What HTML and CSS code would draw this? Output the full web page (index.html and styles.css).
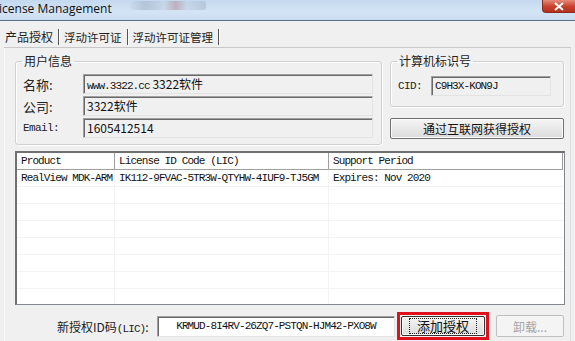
FILE: index.html
```html
<html>
<head>
<meta charset="utf-8">
<title>License Management</title>
<link rel="stylesheet" href="styles.css">
</head>
<body>

<div id="titlebar">
	<div class="title">icense Management</div>
	<div class="ghost"></div>
	<div class="close">
		<svg width="12" height="9" viewBox="0 0 12 9"><path d="M2 1 L10 8 M10 1 L2 8" stroke="#fff" stroke-width="2"/></svg>
	</div>
</div>

<div id="window">
	<div class="tabs">
		<span class="tab active">产品授权</span><span class="sep"></span>
		<span class="tab">浮动许可证</span><span class="sep"></span>
		<span class="tab">浮动许可证管理</span><span class="sep"></span>
	</div>

	<div class="panel">
		<div class="top">
			<fieldset class="group user">
				<legend>用户信息</legend>
				<div class="row">
					<span class="label">名称:</span>
					<span class="field"><span class="mono">www.3322.cc</span> 3322软件</span>
				</div>
				<div class="row">
					<span class="label">公司:</span>
					<span class="field">3322软件</span>
				</div>
				<div class="row">
					<span class="label mono">Email:</span>
					<span class="field">1605412514</span>
				</div>
			</fieldset>

			<div class="side">
				<fieldset class="group cid">
					<legend>计算机标识号</legend>
					<div class="row">
						<span class="label mono">CID:</span>
						<span class="field mono">C9H3X-KON9J</span>
					</div>
				</fieldset>
				<div class="button wide">通过互联网获得授权</div>
			</div>
		</div>

		<div class="list">
			<div class="lhead">
				<span class="c1">Product</span>
				<span class="c2">License ID Code (LIC)</span>
				<span class="c3">Support Period</span>
			</div>
			<div class="lrow">
				<span class="c1">RealView MDK-ARM</span>
				<span class="c2">IK112-9FVAC-5TR3W-QTYHW-4IUF9-TJ5GM</span>
				<span class="c3">Expires: Nov 2020</span>
			</div>
			<div class="lrow"><span class="c1"></span><span class="c2"></span><span class="c3"></span></div>
			<div class="lrow"><span class="c1"></span><span class="c2"></span><span class="c3"></span></div>
			<div class="lrow"><span class="c1"></span><span class="c2"></span><span class="c3"></span></div>
			<div class="lrow"><span class="c1"></span><span class="c2"></span><span class="c3"></span></div>
			<div class="lrow"><span class="c1"></span><span class="c2"></span><span class="c3"></span></div>
			<div class="lrow"><span class="c1"></span><span class="c2"></span><span class="c3"></span></div>
			<div class="lrow"><span class="c1"></span><span class="c2"></span><span class="c3"></span></div>
			<div class="lrow"><span class="c1"></span><span class="c2"></span><span class="c3"></span></div>
		</div>

		<div class="bottom">
			<span class="blabel">新授权ID码<span class="mono">(LIC)</span>:</span>
			<span class="field lic mono">KRMUD-8I4RV-26ZQ7-PSTQN-HJM42-PXO8W</span>
			<span class="mark"><span class="button add"><span class="focus">添加授权</span></span></span>
			<span class="button off">卸载...</span>
		</div>
	</div>
</div>

</body>
</html>
```

FILE: styles.css
```css
body {
	margin: 0;
	width: 575px;
	height: 341px;
	overflow: hidden;
	background: #f0f0f0;
	font-family: "Noto Sans CJK SC", "DejaVu Sans", sans-serif;
	font-size: 12px;
	color: #111;
}

.mono {
	font-family: "Liberation Mono", "Noto Sans CJK SC", monospace;
	font-size: 11px;
	letter-spacing: -0.9px;
}

#titlebar {
	height: 20px;
	display: flex;
	align-items: flex-start;
	background: linear-gradient(#c4d9ef, #d3e4f5 60%, #c9dcf0);
	border-bottom: 1px solid #5d6f86;
}

#titlebar .title {
	font-family: "Open Sans", "DejaVu Sans", sans-serif;
	font-size: 12px;
	line-height: 17px;
	color: #111;
	margin-left: -1px;
	width: 131px;
}

#titlebar .ghost {
	width: 76px;
	height: 9px;
	margin-top: 1px;
	background: linear-gradient(90deg, #c8d8ea, #a2b0c4 20%, #c2d1e3 45%, #b08c98 60%, #c2d1e3 75%, #a9b6c9);
	opacity: 0.55;
	border-radius: 3px;
	flex: none;
	margin-right: auto;
}

#titlebar .close {
	width: 32px;
	height: 12px;
	background: linear-gradient(#e48b7c, #c8402b 55%, #b5321f);
	border: 1px solid #8a2a1f;
	border-top: none;
	border-right: none;
	border-radius: 0 0 0 4px;
	display: flex;
	align-items: center;
	justify-content: center;
}

#window {
	padding: 6px 4px 0 4px;
}

.tabs {
	display: flex;
	align-items: center;
	height: 20px;
	border-bottom: 1px solid #c8c8c8;
	padding-left: 1px;
}

.tab {
	font-size: 11.5px;
	padding: 0 5px 0 1px;
	line-height: 18px;
	color: #222;
}

.tab.active {
	font-size: 12px;
	padding-left: 0;
}

.sep {
	width: 1px;
	height: 16px;
	background: #555;
	border-right: 1px solid #fff;
	margin-right: 3px;
}

.panel {
	border-left: 1px solid #fafafa;
	border-right: 1px solid #dadada;
	padding: 6px 6px 0 10px;
	height: 293px;
}

.top {
	display: flex;
	gap: 8px;
}

.group {
	border: 1px solid #d0d0d0;
	border-radius: 3px;
	margin: 0;
	padding: 0 8px 0 7px;
	box-shadow: inset 1px 1px 0 #fff, 1px 1px 0 #fff;
}

.group legend {
	padding: 0 2px;
	margin-left: -1px;
	font-size: 12px;
	line-height: 14px;
	color: #222;
}

.group.user {
	width: 352px;
	height: 84px;
	padding-top: 5px;
}

.row {
	display: flex;
	align-items: center;
	height: 22px;
}

.row .label {
	width: 60px;
	color: #222;
	font-size: 13px;
}

.row .label.mono {
	font-size: 11px;
	letter-spacing: -0.6px;
}

.field {
	flex: 1;
	height: 18px;
	line-height: 18px;
	background: #f0f0f0;
	border: 1px solid #a0a0a0;
	border-right-color: #e3e3e3;
	border-bottom-color: #e3e3e3;
	box-shadow: inset 1px 1px 0 #696969;
	padding-left: 3px;
	white-space: nowrap;
	overflow: hidden;
	color: #111;
}

.side {
	width: 175px;
	display: flex;
	flex-direction: column;
	gap: 11px;
}

.group.cid {
	height: 44px;
	padding-top: 7px;
	padding-right: 12px;
}

.cid .label {
	width: 33px;
}

.button {
	display: flex;
	align-items: center;
	justify-content: center;
	background: linear-gradient(#f6f6f6, #e8e8e8 50%, #dcdcdc);
	border: 1px solid #707070;
	border-radius: 2px;
	box-shadow: inset 0 0 0 1px #fbfbfb;
	color: #111;
}

.button.wide {
	height: 19px;
	font-size: 12px;
}

.list {
	margin-top: 6px;
	width: 547px;
	height: 151px;
	background: #fff;
	border: 1px solid #828790;
	border-left: 2px solid #707070;
	border-top: 2px solid #707070;
	overflow: hidden;
}

.lhead, .lrow {
	display: flex;
	font-family: "Liberation Mono", monospace;
	font-size: 11px;
	letter-spacing: -0.9px;
	white-space: nowrap;
}

.lhead {
	height: 16px;
	line-height: 17px;
	background: #fff;
	border-bottom: 1px solid #a0a0a0;
	border-right: 1px solid #999;
	margin-right: 1px;
}

.lrow {
	height: 16px;
	line-height: 17px;
	border-bottom: 1px solid #f3f3f3;
}

.c1, .c2, .c3 {
	padding-left: 4px;
	overflow: hidden;
	box-sizing: border-box;
}

.c1 { width: 98px; }
.c2 { width: 214px; }
.c3 { flex: 1; }

.lhead .c1, .lhead .c2 {
	border-right: 1px solid #a0a0a0;
}

.lrow .c1, .lrow .c2 {
	border-right: 1px solid #f3f3f3;
}

.bottom {
	display: flex;
	align-items: center;
	margin-top: 6px;
	height: 30px;
}

.blabel {
	margin-left: 42px;
	width: 100px;
	color: #222;
	font-size: 12px;
}

.field.lic {
	flex: none;
	width: 236px;
	height: 19px;
	line-height: 19px;
	background: #fff;
	text-align: center;
	padding-left: 0;
}

.mark {
	margin-left: 2px;
	border: 3px solid #e0101c;
	padding: 1px;
	display: flex;
}

.button.add {
	width: 82px;
	height: 18px;
	border-color: #333;
	font-size: 13px;
}

.focus {
	border: 1px dotted #222;
	padding: 0 7px;
	line-height: 14px;
}

.button.off {
	margin-left: 7px;
	width: 66px;
	height: 20px;
	color: #a5a5a5;
	border-color: #c0c0c0;
	box-shadow: none;
	background: #f4f4f4;
}
```
